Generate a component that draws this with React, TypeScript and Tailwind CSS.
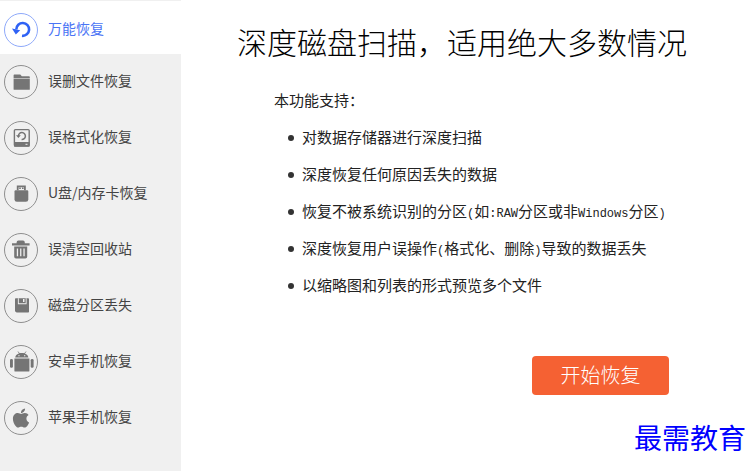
import React, { useState } from 'react';
import clsx from 'clsx';
import { FaApple } from 'react-icons/fa';

const UndoIcon = () => (
  <svg viewBox="1 1 32 32" className="size-full" aria-hidden="true">
    <path d="M12.3 16.4A6.4 6.4 0 1 1 18 22.8" fill="none" stroke="currentColor" strokeWidth="2.6" />
    <path d="M8 15.4l8.2 1.8-4.4 4.2z" fill="currentColor" />
  </svg>
);

const FolderIcon = () => (
  <svg viewBox="1 1 32 32" className="size-full" fill="currentColor" aria-hidden="true">
    <path d="M9.6 10.2q0-.7.7-.7h6l1.5 1.8h7.2q.8 0 .8.7v1.2H9.6z" />
    <path d="M9.6 13.8h16.2v10.4q0 .6-.6.6h-15q-.6 0-.6-.6z" />
  </svg>
);

const DiskIcon = () => (
  <svg viewBox="1 1 32 32" className="size-full" fill="none" stroke="currentColor" aria-hidden="true">
    <rect x="10.4" y="8.6" width="14.8" height="16.4" rx="1" strokeWidth="1.4" />
    <path d="M10 21h15.6v4.6H10z" fill="currentColor" stroke="none" />
    <path d="M14.4 15a3.5 3.5 0 1 1 3.2 3.5" strokeWidth="1.5" />
    <path d="M12 14.2h4.8l-2.4 2.9z" fill="currentColor" stroke="none" />
    <path d="M21.5 23.3h2" stroke="#f0f0f0" />
  </svg>
);

const UsbIcon = () => (
  <svg viewBox="1 1 32 32" className="size-full" fill="currentColor" aria-hidden="true">
    <path d="M12.8 8.4h9v4.8H20v-3h-5.4v3h-1.8z" />
    <path d="M15.2 10.4h1.6V12h-1.6zM18 10.4h1.6V12H18z" />
    <path d="M10.5 14.4q0-1.2 1.2-1.2h11.4q1.2 0 1.2 1.2v8q0 2.4-2.4 2.4h-9q-2.4 0-2.4-2.4z" />
  </svg>
);

const TrashIcon = () => (
  <svg viewBox="1 1 32 32" className="size-full" fill="currentColor" aria-hidden="true">
    <path d="M12.6 9.4q0-1.8 1.8-1.8H19q1.8 0 1.8 1.8v.8h4.8v2.2H8v-2.2h4.6z" />
    <path
      fillRule="evenodd"
      d="M10.2 13.4h13v10.4q0 1.8-1.8 1.8H12q-1.8 0-1.8-1.8zM12.8 15.4v7.8h1.3v-7.8zM16.1 15.4v7.8h1.3v-7.8zM19.4 15.4v7.8h1.3v-7.8z"
    />
  </svg>
);

const FloppyIcon = () => (
  <svg viewBox="1 1 32 32" className="size-full" aria-hidden="true">
    <path d="M11 10q0-.8.8-.8h12.4q.8 0 .8.8v12.8q0 .8-.8.8H12.6L11 22.200z" fill="currentColor" />
    <path d="M13.9 9.2h.9v5h6.9v-5h.9v6h-8.7z" fill="#f0f0f0" />
    <path d="M19 10h1.5v3H19z" fill="#f0f0f0" />
  </svg>
);

const AndroidIcon = () => (
  <svg viewBox="1 1 32 32" className="size-full" fill="currentColor" aria-hidden="true">
    <path d="M14 6.5l1.8 2.6M22 6.5l-1.8 2.6" stroke="currentColor" strokeWidth=".8" />
    <path
      fillRule="evenodd"
      d="M11.2 12.6c.5-3 3.2-4.6 6.6-4.6s6.1 1.6 6.6 4.6zM14.3 10.2v1.1h1.3v-1.1zM20 10.2v1.1h1.3v-1.1z"
    />
    <path d="M10.4 13.5h15v12.2q0 .9-.9.9H11.3q-.9 0-.9-.9z" />
    <rect x="6" y="14" width="2.9" height="8.8" rx="1.2" />
    <rect x="26.7" y="14" width="2.9" height="8.8" rx="1.2" />
  </svg>
);

const AppleIcon = () => <FaApple className="size-[22px]" aria-hidden="true" />;

const menu = [
  { label: '万能恢复', Icon: UndoIcon },
  { label: '误删文件恢复', Icon: FolderIcon },
  { label: '误格式化恢复', Icon: DiskIcon },
  { label: 'U盘/内存卡恢复', Icon: UsbIcon },
  { label: '误清空回收站', Icon: TrashIcon },
  { label: '磁盘分区丢失', Icon: FloppyIcon },
  { label: '安卓手机恢复', Icon: AndroidIcon },
  { label: '苹果手机恢复', Icon: AppleIcon },
];

const Latin: React.FC<{ children: React.ReactNode }> = ({ children }) => (
  <span className="font-['Liberation_Mono',monospace] text-xs leading-none">{children}</span>
);

const features: React.ReactNode[] = [
  '对数据存储器进行深度扫描',
  '深度恢复任何原因丢失的数据',
  <>
    恢复不被系统识别的分区<Latin>(</Latin>如<Latin>:RAW</Latin>分区或非<Latin>Windows</Latin>分区<Latin>)</Latin>
  </>,
  <>
    深度恢复用户误操作<Latin>(</Latin>格式化、删除<Latin>)</Latin>导致的数据丢失
  </>,
  '以缩略图和列表的形式预览多个文件',
];

const Sidebar: React.FC = () => {
  const [active, setActive] = useState(0);
  return (
    <nav className="w-[181px] shrink-0 border-t border-[#f0f0f0] bg-[#f0f0f0] font-['Noto_Sans_CJK_SC',sans-serif]">
      {menu.map(({ label, Icon }, i) => (
        <button
          key={label}
          type="button"
          onClick={() => setActive(i)}
          className={clsx(
            'flex w-full items-center gap-2.5 pl-1 text-left text-sm',
            i === 0 ? 'h-[53px] pt-1' : 'h-14',
            i === active ? 'bg-white text-[#4a74f5]' : 'text-[#444]'
          )}
        >
          <span
            className={clsx(
              'flex size-[34px] shrink-0 items-center justify-center rounded-full border',
              i === active ? 'border-[#8ea9fa] text-[#2f62f5]' : 'border-[#8f8f8f] text-[#757575]'
            )}
          >
            <Icon />
          </span>
          <span className="pb-1">{label}</span>
        </button>
      ))}
    </nav>
  );
};

export default function App() {
  return (
    <div className="flex min-h-screen bg-white font-['Liberation_Sans','Noto_Sans_CJK_SC',sans-serif]">
      <Sidebar />
      <main className="flex flex-1 flex-col pt-6 pl-14 text-[#222]">
        <h1 className="text-[30px] leading-10 font-light whitespace-nowrap text-black">
          深度磁盘扫描，适用绝大多数情况
        </h1>
        <section className="pt-[27px] pl-[37px] text-[15px]">
          <p className="leading-5">本功能支持：</p>
          <ul className="flex flex-col gap-[17px] pt-[17px] pl-3.5">
            {features.map((item, i) => (
              <li key={i} className="flex h-5 items-center gap-2 leading-5 whitespace-nowrap">
                <span className="size-1.5 shrink-0 rounded-full bg-[#333]" />
                <span>{item}</span>
              </li>
            ))}
          </ul>
        </section>
        <button
          type="button"
          className="mt-[60px] mr-[85px] h-[39px] w-[137px] self-end rounded bg-[#f56133] text-xl font-light text-white"
        >
          开始恢复
        </button>
        <p className="mt-[25px] mr-2 self-end font-['Liberation_Serif','Noto_Sans_CJK_SC',serif] text-[28px] leading-10 text-[#0000ff]">
          最需教育
        </p>
      </main>
    </div>
  );
}
